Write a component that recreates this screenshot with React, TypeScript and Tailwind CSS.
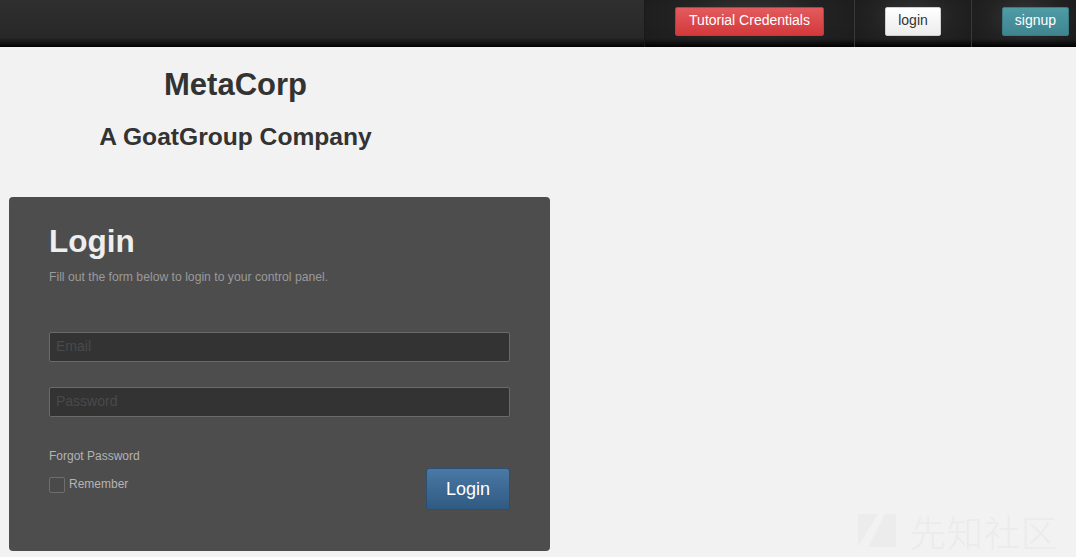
import React from "react";

function NavItem({ children, last }: { children: React.ReactNode; last?: boolean }) {
  return (
    <div
      className={`flex items-start h-full pt-[7px] pl-[30px] border-l border-[#383838] ${last ? "pr-[7px]" : "pr-[30px]"} [background:linear-gradient(to_bottom,rgba(0,0,0,0)_0%,rgba(0,0,0,0)_83%,#000_100%),radial-gradient(ellipse_60%_90%_at_50%_35%,#353535_0%,#222_60%,#1c1c1c_100%)]`}
    >
      {children}
    </div>
  );
}

export default function App() {
  return (
    <div className="relative min-h-[557px] bg-[#f2f2f2] font-['Liberation_Sans',Arial,sans-serif] text-[#333] overflow-hidden">
      {/* Navbar */}
      <div className="flex h-[47px] justify-end [background:linear-gradient(to_bottom,#2f2f2f_0%,#282828_80%,#111_92%,#000_100%)]">
        <div className="flex h-full">
          <div className="flex items-start h-full pt-[7px] pl-[30px] pr-[30px] border-l border-[#1a1a1a] [background:linear-gradient(to_bottom,rgba(0,0,0,0)_0%,rgba(0,0,0,0)_83%,#000_100%),radial-gradient(ellipse_60%_90%_at_50%_35%,#353535_0%,#222_60%,#1c1c1c_100%)]">
            <button className="h-[29px] w-[149px] pb-[3px] rounded-[2px] border border-[#c23a3a] text-white text-[14px] leading-none [background:linear-gradient(to_bottom,#e35b5e,#d3393b)]">
              Tutorial Credentials
            </button>
          </div>
          <NavItem>
            <button className="h-[29px] w-[56px] pb-[3px] rounded-[2px] border border-[#cfcfcf] text-[#333] text-[14px] leading-none [background:linear-gradient(to_bottom,#ffffff,#ececec)]">
              login
            </button>
          </NavItem>
          <NavItem last>
            <button className="h-[29px] w-[67px] pb-[3px] rounded-[2px] border border-[#3a7c86] text-white text-[14px] leading-none [background:linear-gradient(to_bottom,#4f9ba6,#3f8590)]">
              signup
            </button>
          </NavItem>
        </div>
      </div>

      {/* Header */}
      <div className="w-[471px] text-center">
        <h1 className="mt-[21px] text-[31px] leading-[34px] font-bold">MetaCorp</h1>
        <h2 className="mt-[21px] text-[24.6px] leading-[27px] font-bold">A GoatGroup Company</h2>
      </div>

      {/* Login panel */}
      <div className="ml-[9px] mt-[47px] w-[541px] rounded-[4px] bg-[#4d4d4d] px-[40px] pt-[27px] pb-[41px]">
        <h1 className="text-[31.5px] leading-[34px] font-bold text-[#eeeeee]">Login</h1>
        <p className="mt-[11px] text-[12.2px] leading-[17px] text-[#9a9a9a]">
          Fill out the form below to login to your control panel.
        </p>
        <input
          type="text"
          placeholder="Email"
          className="mt-[46px] block w-full h-[30px] rounded-[2px] border border-[#6a6a6a] bg-[#333] px-[6px] pb-[2px] text-[14px] text-[#ddd] placeholder:text-[#4a4a4a] outline-none"
        />
        <input
          type="password"
          placeholder="Password"
          className="mt-[25px] block w-full h-[30px] rounded-[2px] border border-[#6a6a6a] bg-[#333] px-[6px] pb-[2px] text-[14px] text-[#ddd] placeholder:text-[#4a4a4a] outline-none"
        />
        <div className="mt-[31px] flex justify-between items-start">
          <div>
            <div className="text-[12px] leading-[17px] text-[#b3b3b3]">Forgot Password</div>
            <div className="mt-[11px] flex items-center gap-[4px]">
              <span className="block w-[16px] h-[16px] rounded-[2px] border border-[#6e6e6e] bg-[#4a4a4a]" />
              <span className="text-[12px] leading-[17px] text-[#b3b3b3]">Remember</span>
            </div>
          </div>
          <button className="mt-[20px] h-[42px] w-[84px] rounded-[3px] border border-[#2c5074] text-white text-[18px] leading-none [background:linear-gradient(to_bottom,#4a79a5,#2f5a82)]">
            Login
          </button>
        </div>
      </div>

      {/* Watermark */}
      <div className="absolute right-[18px] bottom-[8px] flex items-center gap-[14px] text-[#ebebeb]">
        <svg width="38" height="36" viewBox="0 0 38 36">
          <polygon points="0,1 20,1 0,34" fill="#ececec" />
          <polygon points="27,1 38,1 38,34 10,34" fill="#ececec" />
        </svg>
        <span className="text-[36px] leading-none font-light tracking-[1px] font-['Noto_Sans_CJK_SC',sans-serif]">
          先知社区
        </span>
      </div>
    </div>
  );
}
